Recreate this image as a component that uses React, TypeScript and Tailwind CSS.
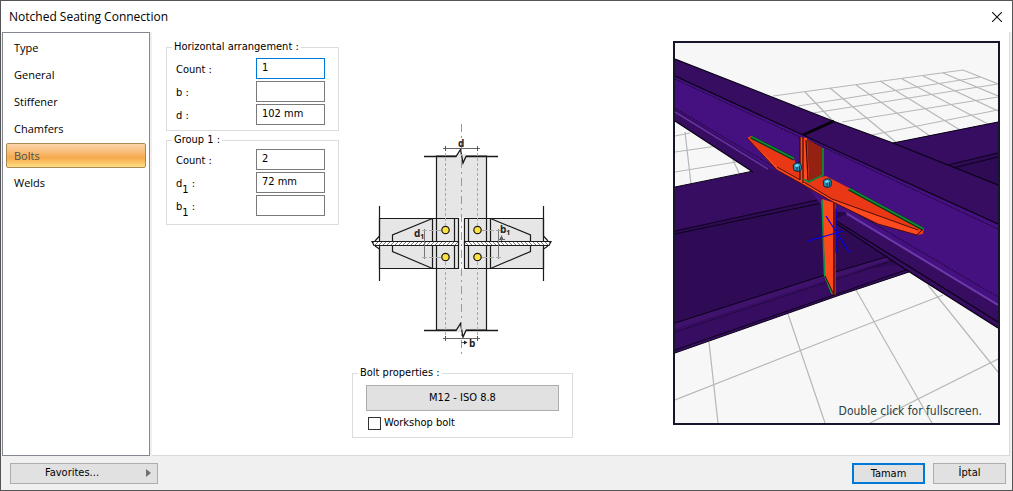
import { useState } from "react";

const tabs = ["Type", "General", "Stiffener", "Chamfers", "Bolts", "Welds"];

interface FieldProps {
  id: string;
  label: string;
  sub?: string;
  value: string;
  autoFocus?: boolean;
  onChange: (value: string) => void;
}

function Field({ id, label, sub, value, autoFocus, onChange }: FieldProps) {
  return (
    <div className="flex items-center justify-between">
      <label htmlFor={id} className="pt-0.5">
        {label}
        {sub && <span className="relative top-1.5">{sub}</span>} :
      </label>
      <input
        id={id}
        type="text"
        value={value}
        autoFocus={autoFocus}
        onChange={(e) => onChange(e.target.value)}
        className="h-[21px] w-[69px] border border-[#7a7a7a] bg-white px-[5px] pb-0.5 outline-none focus:border-[#0078d7]"
      />
    </div>
  );
}

function BeamPlate() {
  return (
    <g stroke="#1a1a1a" strokeWidth="1.2">
      <path d="M379.5 218.500H458.500V268.500H379.500Z" fill="#e6e6e6" />
      <path d="M379.500 206V236L375 241M375 246L379.500 249V281" fill="none" />
      <path d="M432.500 218.500L392.500 235V251.500L432.500 268.500" fill="none" />
      <path d="M432.500 218.500V268.500M436.500 218.500V268.500M454.500 218.500V268.500" />
      <path d="M372 241.500H458.500V245.500H374Z" fill="url(#hatch)" />
      <path d="M424.500 229V259" stroke="#777" strokeWidth="1" />
      <path d="M422 230.500H442M422 257.500H442" stroke="#aaa" strokeWidth="1" strokeDasharray="5 2" />
      <circle cx="445.500" cy="230" r="3.700" fill="#ffe23d" />
      <circle cx="445.500" cy="257" r="3.700" fill="#ffe23d" />
    </g>
  );
}

function ConnectionDiagram() {
  return (
    <svg viewBox="371 120 182 240" className="h-[240px] w-[182px]" aria-label="Bolt arrangement">
      <defs>
        <pattern id="hatch" width="4" height="4" patternUnits="userSpaceOnUse">
          <rect width="4" height="4" fill="#fff" />
          <path d="M0 4L4 0" stroke="#555" strokeWidth="0.8" />
        </pattern>
      </defs>
      <path d="M436.500 156H486.500V330H436.500Z" fill="#e6e6e6" stroke="#1a1a1a" strokeWidth="1.2" />
      <rect x="456" y="154" width="10" height="4" fill="#e6e6e6" />
      <rect x="456" y="328" width="10" height="4" fill="#e6e6e6" />
      <path
        d="M424 156.500H456L460.500 149.500L463 163L466 156.500H498M424 330.500H456L460.500 323.500L463 337L466 330.500H498"
        fill="none"
        stroke="#1a1a1a"
        strokeWidth="1.3"
      />
      <rect x="458" y="217" width="7" height="53" fill="#f7f7f7" />
      <BeamPlate />
      <g transform="translate(923 0) scale(-1 1)">
        <BeamPlate />
      </g>
      <path d="M461.500 124V358" stroke="#999" strokeDasharray="8 4 2 4" />
      <path d="M445.500 148V226M477.500 148V226M445.500 262V338M477.500 262V338" stroke="#aaa" strokeDasharray="3 2" />
      <path d="M443 148.500H480M443 338.500H480" stroke="#666" />
      <path d="M445.500 146V151M477.500 146V151M445.500 336V341M477.500 336V341M461.500 342.500H466" stroke="#555" />
      <path d="M464 340.500L467.500 342.500L464 344.500ZM500 239L501.500 235L503 239Z" fill="#222" />
      <path d="M499 239.500H505M501.500 236V241" stroke="#666" />
      <g fontFamily="'Open Sans', sans-serif" fontWeight="700" fontSize="10" fill="#222">
        <text x="458" y="147">d</text>
        <text x="469" y="347">b</text>
        <text x="414" y="237">d<tspan fontSize="7" dy="2">1</tspan></text>
        <text x="500" y="233">b<tspan fontSize="7" dy="2">1</tspan></text>
      </g>
    </svg>
  );
}

function Bolt({ x, y }: { x: number; y: number }) {
  return (
    <g transform={`translate(${x} ${y})`}>
      <path d="M-4 -2L-1 -4L3 -4L4.500 -1L4 3L1 4.500L-3 3.500Z" fill="#2b8fb5" stroke="#082b3d" strokeWidth="1" />
      <path d="M-2 -2L1 -3L2 -1L-1 0Z" fill="#7fe0f5" />
      <path d="M0 0V4M2.500 -1V3" stroke="#0b3a52" strokeWidth="1" />
    </g>
  );
}

function ModelView() {
  return (
    <svg viewBox="675 43 323 380" className="block h-[380px] w-[323px]" aria-label="3D model">
      <rect x="675" y="43" width="323" height="380" fill="#f7f7f7" />
      <g fill="none" stroke="#b4b8b6" strokeWidth="1.2">
        <path d="M773 96L963 70L998 84M798 106L980 77M813 113L998 84M842 122L998 97M872 135L998 110" />
        <path d="M943 73L998 96M923 76L998 111M902 79L988 124M880 81L960 130M856 85L930 136M830 88L897 143M805 92L832 120" />
        <path d="M675 136L690 133M675 152L717 146M675 172L742 161M685 132L691 184M733 160L739 173" />
        <path d="M709 342L718 423M788 314L825 423M675 400L840 335L943 295M856 290L932 423M928 285L998 372M870 423L998 359" />
      </g>

      {/* cross beam */}
      <path d="M675 187L893 143L998 122V328L909 272L840 295L675 353Z" fill="#360d60" />
      <path d="M675 231L822 200L998 153V250L825 275L675 323Z" fill="#2e0b54" />
      <path d="M893 143L998 122V153L948 165Z" fill="#360d60" />
      <path d="M675 323L825 275L885 257L890 260L675 329Z" fill="#3f126b" />
      <path d="M675 187L773 167M675 231L822 199M675 234L822 203M893 143L998 122M948 165L998 153M953 168L998 157" fill="none" stroke="#0c0218" />
      <path d="M675 323L825 275L886 257M675 353L840 295L909 272M675 350L909 269" fill="none" stroke="#0c0218" />
      <path d="M675 332L892 261" stroke="#1c0735" strokeDasharray="2 1" />

      {/* left main beam */}
      <path d="M675 59L833 121L803 137L803 180L753 172L675 121Z" fill="#360d60" />
      <path d="M675 76L803 135V184L770 168L675 109Z" fill="#451180" />
      <path d="M675 112L768 169" stroke="#65329f" strokeWidth="1.500" />
      <path d="M675 59L833 121M675 76L803 135M675 121L753 172" fill="none" stroke="#0c0218" strokeWidth="1.300" />
      <path d="M675 79L802 138M675 108L774 167" stroke="#1c0735" strokeDasharray="2 1" />

      {/* right main beam */}
      <path d="M803 135L833 121L893 143L998 185V328L908 271L828 218Z" fill="#360d60" />
      <path d="M803 135L835 150L998 224V304L842 213L828 215L803 180Z" fill="#451180" />
      <path d="M846 213L998 305" stroke="#6d3aa8" strokeWidth="2" />
      <path d="M833 121L893 143L998 185M803 135L835 150L998 224M828 218L908 271L998 328M830 217L998 322" fill="none" stroke="#0c0218" strokeWidth="1.200" />
      <path d="M806 139L998 229M856 213L998 297" stroke="#1c0735" strokeDasharray="2 1" />
      <path d="M803 135L834 121" stroke="#050108" strokeWidth="2.500" />
      <path d="M832 212Q846 211 847 214Q840 218 830 219Z" fill="#270847" />

      {/* vertical stiffener */}
      <path d="M822 199L835 203V295L832 294L825 276Z" fill="#ff481c" />
      <path d="M833 202H836V295L833 292Z" fill="#b6270e" />
      <path d="M822 200L824.500 275L832 294" fill="none" stroke="#07983e" strokeWidth="1.500" />
      <path d="M834 203V295M825 276L834 295" fill="none" stroke="#3b0805" />

      {/* seating plate */}
      <path d="M747 138L751 136L794 159L803 180L826 176L849 188L924 228L923 234L917 235L878 224L833 202L802 184L777 170Z" fill="#ea3817" />
      <path d="M747 138L777 167L802 181L832 199L918 230L917 235L878 224L833 202L802 184L777 170Z" fill="#ff4a20" />
      <path d="M747 138L777 170L802 184L833 202L878 224L917 235L923 229M777 167L802 181L832 199L918 230" fill="none" stroke="#3b0805" strokeWidth="0.900" />
      <path d="M751 137L794 159M849 189L923 229" stroke="#06391b" strokeWidth="3.500" />
      <path d="M751 136.500L794 158.500M849 188.500L923 228.500" stroke="#138c38" strokeWidth="1.500" />

      {/* end plates */}
      <path d="M807 139L823 148V176L808 181Z" fill="#942111" />
      <path d="M800 137L807 138L809 180L803 183L800 181Z" fill="#ff4a20" />
      <path d="M800 137V180M803 137V183M806 140L808 181" fill="none" stroke="#3b0805" strokeWidth="1.200" />
      <path d="M823 148V175L809 182L803 179" fill="none" stroke="#0b8a35" strokeWidth="1.800" />
      <Bolt x={797} y={167} />
      <Bolt x={827} y={183} />

      <path d="M808 241L843 231M836 209V253M826 216L849 252" fill="none" stroke="#0000f0" strokeWidth="1.200" />
    </svg>
  );
}

const buttonClass = "h-[21px] border border-[#adadad] bg-[#e1e1e1]";
const groupClass = "border border-[#dcdcdc]";

export default function App() {
  const [active, setActive] = useState("Bolts");
  const [workshop, setWorkshop] = useState(false);
  const [values, setValues] = useState({ count: "1", b: "", d: "102 mm", count1: "2", d1: "72 mm", b1: "" });

  const update = (key: keyof typeof values) => (value: string) => setValues({ ...values, [key]: value });

  return (
    <div className="flex min-h-screen flex-col border border-[#555] bg-[#f0f0f0] font-['DejaVu_Sans_Condensed','Open_Sans',sans-serif] text-[11px] leading-4 text-black">
      <header className="flex h-[31px] items-center justify-between bg-white pr-2 pl-2">
        <h1 className="font-['Open_Sans',sans-serif] text-[12px]">Notched Seating Connection</h1>
        <button aria-label="Close" className="p-0.5">
          <svg viewBox="0 0 10 10" className="h-2.5 w-2.5">
            <path d="M0 0L10 10M10 0L0 10" stroke="#111" strokeWidth="1.100" />
          </svg>
        </button>
      </header>

      <main className="flex flex-1 gap-0.5 pr-0.5">
        <nav className="ml-px flex w-[148px] flex-col gap-0.5 border border-[#828790] bg-white px-[3px] py-0.5 font-['Open_Sans',sans-serif]">
          {tabs.map((tab) => (
            <button
              key={tab}
              onClick={() => setActive(tab)}
              className={
                "h-[25px] rounded-xs border px-[7px] text-left " +
                (tab === active
                  ? "border-[#a98a55] bg-linear-to-b from-[#fbd5aa] from-0% via-[#f5a94a] via-60% to-[#fddf83] text-[#4f4f4f]"
                  : "border-transparent")
              }
            >
              {tab}
            </button>
          ))}
        </nav>

        <section className="flex flex-1 border-r border-b border-[#d9d9d9] bg-white pr-[9px] pl-3.5">
          <div className="flex w-[173px] flex-col gap-px pt-[7px]">
            <fieldset className={groupClass + " px-[9px] pb-[5px]"}>
              <legend className="-ml-1 px-0.5">Horizontal arrangement :</legend>
              <div className="flex flex-col gap-0.5 pt-[3px] pr-1">
                <Field id="count" label="Count" value={values.count} onChange={update("count")} autoFocus />
                <Field id="b" label="b" value={values.b} onChange={update("b")} />
                <Field id="d" label="d" value={values.d} onChange={update("d")} />
              </div>
            </fieldset>
            <fieldset className={groupClass + " px-[9px] pb-2"}>
              <legend className="-ml-1 px-0.5">Group 1 :</legend>
              <div className="flex flex-col gap-0.5 pt-px pr-1">
                <Field id="count1" label="Count" value={values.count1} onChange={update("count1")} />
                <Field id="d1" label="d" sub="1" value={values.d1} onChange={update("d1")} />
                <Field id="b1" label="b" sub="1" value={values.b1} onChange={update("b1")} />
              </div>
            </fieldset>
          </div>

          <div className="ml-[13px] flex w-[221px] flex-col justify-end pb-[17px]">
            <div className="ml-[19px]">
              <ConnectionDiagram />
            </div>
            <fieldset className={groupClass + " mt-[5px] px-[13px] pb-1.5"}>
              <legend className="-ml-2 px-0.5">Bolt properties :</legend>
              <button className="mt-1 h-[26px] w-full border border-[#adadad] bg-[#e1e1e1]">M12 - ISO 8.8</button>
              <label className="mt-1 flex items-center gap-[3px] pl-0.5">
                <input
                  type="checkbox"
                  checked={workshop}
                  onChange={(e) => setWorkshop(e.target.checked)}
                  className="h-[13px] w-[13px] appearance-none border border-[#333] bg-white checked:bg-[#333]"
                />
                Workshop bolt
              </label>
            </fieldset>
          </div>

          <div className="relative mt-[9px] ml-auto self-start border-2 border-[#15152c]">
            <ModelView />
            <span className="absolute right-4 bottom-1 font-['DejaVu_Sans_Condensed',sans-serif] text-[12px] text-[#29403f]">
              Double click for fullscreen.
            </span>
          </div>
        </section>
      </main>

      <footer className="flex h-[34px] items-center pr-1.5 pl-[9px]">
        <button className={buttonClass + " flex w-[148px] items-center pr-1.5 pl-[34px]"}>
          Favorites...
          <svg viewBox="0 0 5 8" className="ml-auto h-2 w-[5px]">
            <path d="M0 0L5 4L0 8Z" fill="#707070" />
          </svg>
        </button>
        <button className="ml-auto h-[21px] w-[73px] border-2 border-[#0078d7] bg-[#e1e1e1] leading-none">Tamam</button>
        <button className={buttonClass + " ml-2 w-[73px]"}>İptal</button>
      </footer>
    </div>
  );
}
